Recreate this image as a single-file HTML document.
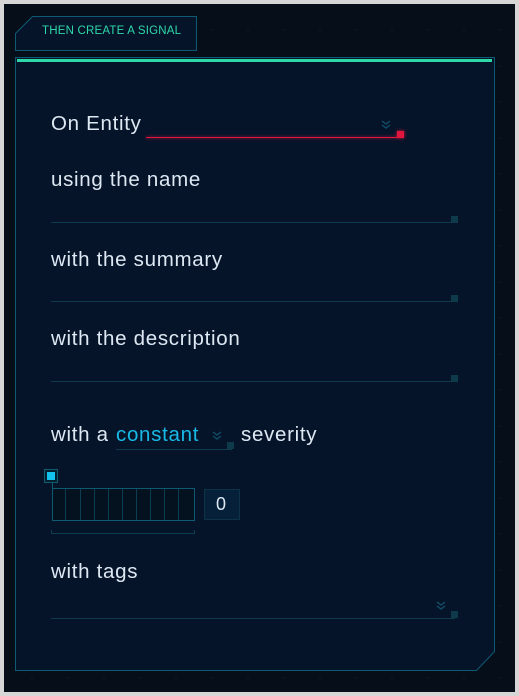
<!DOCTYPE html>
<html><head><meta charset="utf-8"><style>
*{margin:0;padding:0;box-sizing:border-box}
html,body{width:519px;height:696px;overflow:hidden;background:#d6d6d6}
#bg{position:absolute;left:4px;top:4px;width:511px;height:688px;background:#050e19;
background-image:radial-gradient(#0b1722 1px,transparent 1.2px);background-size:36px 36px;background-position:10px 8px}
.t{position:absolute;font-family:"Liberation Sans",sans-serif;font-size:20.5px;color:#dde8f2;letter-spacing:0.7px;white-space:nowrap}
.ln{position:absolute;height:1px;background:#0f3a4c}
.sq{position:absolute;width:7px;height:7px;background:#0f3a4c}
</style></head><body>
<div id="bg"></div>
<svg width="519" height="696" style="position:absolute;left:0;top:0">
 <path d="M32.5 16.5H196.5V50.5H15.5V33.5Z" fill="#06142a" stroke="#0e5a72"/>
 <path d="M15.5 57.5H494.5V651.5L476.5 670.5H15.5Z" fill="#06142a" stroke="#0e5a72"/>
 <rect x="17" y="59" width="475" height="3" fill="#2fd8a9"/>
 <g fill="none" stroke="#11506a" stroke-width="1.3">
  <path d="M382 121l4 3 4-3M382 125l4 3 4-3"/>
  <path d="M213 432l4 3 4-3M213 436l4 3 4-3"/>
  <path d="M437 602l4 3 4-3M437 606l4 3 4-3"/>
 </g>
 <rect x="52.5" y="488.5" width="142" height="32" fill="#04121f" stroke="#0e5a72"/>
 <g stroke="#0c3e52">
  <line x1="65.5" y1="489" x2="65.5" y2="520"/><line x1="80.5" y1="489" x2="80.5" y2="520"/>
  <line x1="94.5" y1="489" x2="94.5" y2="520"/><line x1="108.5" y1="489" x2="108.5" y2="520"/>
  <line x1="122.5" y1="489" x2="122.5" y2="520"/><line x1="136.5" y1="489" x2="136.5" y2="520"/>
  <line x1="150.5" y1="489" x2="150.5" y2="520"/><line x1="164.5" y1="489" x2="164.5" y2="520"/>
  <line x1="178.5" y1="489" x2="178.5" y2="520"/>
 </g>
 <line x1="52.5" y1="480" x2="52.5" y2="520" stroke="#0e5a72"/>
 <path d="M51.5 530V533.5H194.5V530" fill="none" stroke="#0c3e52"/>
 <rect x="44.5" y="469.5" width="13" height="13" fill="#03202f" stroke="#0e5a72"/>
 <rect x="47" y="472" width="8" height="8" fill="#13c3ee"/>
 <rect x="204.5" y="489.5" width="35" height="30" fill="#06203a" stroke="#0d3347"/>
</svg>
<div class="t" style="left:42px;top:25px;font-size:11.5px;color:#2fd8a9;letter-spacing:0.2px">THEN CREATE A SIGNAL</div>

<div class="t" style="left:51px;top:112px">On Entity</div>
<div style="position:absolute;left:146px;top:137px;width:252px;height:1px;background:#e0163f;box-shadow:0 0 3px #e0163f"></div>
<div style="position:absolute;left:397px;top:131px;width:7px;height:7px;background:#e0163f;box-shadow:0 0 3px #e0163f"></div>

<div class="t" style="left:51px;top:168px">using the name</div>
<div class="ln" style="left:51px;top:222px;width:404px"></div><div class="sq" style="left:451px;top:216px"></div>

<div class="t" style="left:51px;top:248px">with the summary</div>
<div class="ln" style="left:51px;top:301px;width:404px"></div><div class="sq" style="left:451px;top:295px"></div>

<div class="t" style="left:51px;top:327px">with the description</div>
<div class="ln" style="left:51px;top:381px;width:404px"></div><div class="sq" style="left:451px;top:375px"></div>

<div class="t" style="left:51px;top:423px">with a</div>
<div class="t" style="left:116px;top:423px;color:#19b9e6">constant</div>
<div class="ln" style="left:116px;top:449px;width:116px"></div><div class="sq" style="left:227px;top:442px"></div>
<div class="t" style="left:241px;top:423px">severity</div>

<div class="t" style="left:216px;top:494px;font-size:18px">0</div>

<div class="t" style="left:51px;top:560px">with tags</div>
<div class="ln" style="left:51px;top:618px;width:404px"></div><div class="sq" style="left:451px;top:611px"></div>
</body></html>
